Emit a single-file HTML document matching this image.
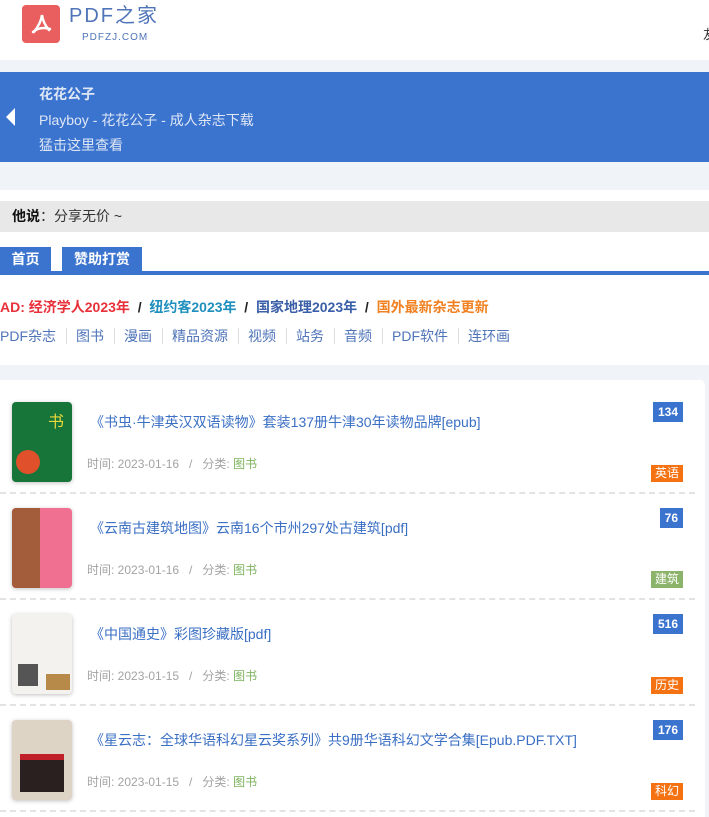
<!DOCTYPE html>
<html><head><meta charset="utf-8"><style>
*{margin:0;padding:0;box-sizing:border-box}
body{width:709px;height:817px;overflow:hidden;background:#fff;font-family:"Liberation Sans","Noto Sans CJK SC",sans-serif;position:relative}
.abs{position:absolute}
.logo{left:22px;top:5px;width:38px;height:38px;background:#e95f5f;border-radius:4px}
.banner{left:0;top:72px;width:709px;height:90px;background:#3b74cf;color:#dfe7f5}
.item{position:absolute;left:0;width:695px;height:106px;border-bottom:2px dashed #e3e3e3}
.thumb{position:absolute;left:12px;top:14px;width:60px;height:80px;border-radius:4px;box-shadow:0 1px 4px rgba(0,0,0,.25);overflow:hidden}
.title{position:absolute;left:90px;top:24px;font-size:14px;color:#3a6fc4;white-space:nowrap}
.meta{position:absolute;left:87px;top:67px;font-size:12px;color:#a3a3a3;white-space:nowrap}
.meta b{font-weight:normal;color:#7cb35c}
.cnt{position:absolute;right:12px;top:14px;background:#3b74cf;color:#fff;font-size:12px;font-weight:bold;padding:2px 5px;line-height:16px}
.tag{position:absolute;right:12px;top:77px;color:#fff;font-size:12px;padding:0 4px;line-height:17px}
.cat a{color:#4f74b8;text-decoration:none;padding:0 9.5px;border-right:1px solid #ddd}
</style></head><body>
<div class="abs logo"><svg width="38" height="38" viewBox="0 0 38 38"><path d="M12 27 Q19 18 20 10 Q21 18 27 25 M11 27 Q18 21 28 24" stroke="#fff" stroke-width="2.5" fill="none" stroke-linecap="round"/></svg></div>
<div class="abs" style="left:69px;top:3px;font-size:20px;color:#4f74b8;letter-spacing:2px;line-height:26px">PDF之家</div>
<div class="abs" style="left:82px;top:31px;font-size:10px;color:#4f74b8;letter-spacing:1px;line-height:13px">PDFZJ.COM</div>
<div class="abs" style="left:703px;top:24px;font-size:13px;color:#333">友</div>
<div class="abs" style="left:0;top:60px;width:709px;height:12px;background:#f0f3f7"></div>
<div class="abs banner">
<div class="abs" style="left:6px;top:36px;width:0;height:0;border-top:9px solid transparent;border-bottom:9px solid transparent;border-right:9px solid #fff"></div>
<div class="abs" style="left:39px;top:12px;font-size:14px;font-weight:bold">花花公子</div>
<div class="abs" style="left:39px;top:38px;font-size:14px">Playboy - 花花公子 - 成人杂志下载</div>
<div class="abs" style="left:39px;top:63px;font-size:14px">猛击这里查看</div>
</div>
<div class="abs" style="left:0;top:162px;width:709px;height:28px;background:#f0f3f7"></div>
<div class="abs" style="left:0;top:201px;width:709px;height:31px;background:#e8e8e8;font-size:14px;line-height:31px;padding-left:12px;color:#333"><b style="color:#111">他说</b>：分享无价 ~</div>
<div class="abs" style="left:0;top:247px;width:51px;height:24px;background:#3b74cf;color:#fff;font-weight:bold;font-size:14px;text-align:center;line-height:24px">首页</div>
<div class="abs" style="left:62px;top:247px;width:80px;height:24px;background:#3b74cf;color:#fff;font-weight:bold;font-size:14px;text-align:center;line-height:24px">赞助打赏</div>
<div class="abs" style="left:0;top:271px;width:709px;height:4px;background:#3b74cf"></div>
<div class="abs" style="left:0;top:297px;font-size:14px;white-space:nowrap;font-weight:bold"><span style="color:#e8303a">AD: 经济学人2023年</span> <span style="color:#222">&nbsp;/&nbsp;</span> <span style="color:#1f8fbd">纽约客2023年</span> <span style="color:#222">&nbsp;/&nbsp;</span> <span style="color:#3a5fa8">国家地理2023年</span> <span style="color:#222">&nbsp;/&nbsp;</span> <span style="color:#f08020">国外最新杂志更新</span></div>
<div class="abs cat" style="left:-9.5px;top:326px;font-size:14px;white-space:nowrap"><a>PDF杂志</a><a>图书</a><a>漫画</a><a>精品资源</a><a>视频</a><a>站务</a><a>音频</a><a>PDF软件</a><a style="border:none">连环画</a></div>
<div class="abs" style="left:0;top:365px;width:709px;height:452px;background:#f0f3f7"></div>
<div class="abs" style="left:0;top:380px;width:705px;height:437px;background:#fff;border-radius:0 5px 0 0">
<div class="item" style="top:8px">
<div class="thumb" style="background:#17753a"><div style="position:absolute;left:4px;top:48px;width:24px;height:24px;border-radius:50%;background:#e0502a"></div><div style="position:absolute;left:36px;top:6px;color:#e8d83a;font-size:16px">书</div></div>
<div class="title">《书虫·牛津英汉双语读物》套装137册牛津30年读物品牌[epub]</div>
<div class="meta">时间: 2023-01-16 &nbsp; / &nbsp; 分类: <b>图书</b></div>
<div class="cnt">134</div><div class="tag" style="background:#f47212">英语</div></div>
<div class="item" style="top:114px">
<div class="thumb" style="background:#f07092"><div style="width:28px;height:80px;background:#a45d3a"></div></div>
<div class="title">《云南古建筑地图》云南16个市州297处古建筑[pdf]</div>
<div class="meta">时间: 2023-01-16 &nbsp; / &nbsp; 分类: <b>图书</b></div>
<div class="cnt">76</div><div class="tag" style="background:#8cb36a">建筑</div></div>
<div class="item" style="top:220px">
<div class="thumb" style="background:#f4f2ee"><div style="position:absolute;left:6px;top:50px;width:20px;height:22px;background:#555"></div><div style="position:absolute;left:34px;top:60px;width:24px;height:16px;background:#b88a4a"></div></div>
<div class="title">《中国通史》彩图珍藏版[pdf]</div>
<div class="meta">时间: 2023-01-15 &nbsp; / &nbsp; 分类: <b>图书</b></div>
<div class="cnt">516</div><div class="tag" style="background:#f47212">历史</div></div>
<div class="item" style="top:326px">
<div class="thumb" style="background:#ded4c6"><div style="position:absolute;left:8px;top:34px;width:44px;height:38px;background:#2a2020;border-top:6px solid #c0202a"></div></div>
<div class="title">《星云志：全球华语科幻星云奖系列》共9册华语科幻文学合集[Epub.PDF.TXT]</div>
<div class="meta">时间: 2023-01-15 &nbsp; / &nbsp; 分类: <b>图书</b></div>
<div class="cnt">176</div><div class="tag" style="background:#f47212">科幻</div></div>
</div>
</body></html>
